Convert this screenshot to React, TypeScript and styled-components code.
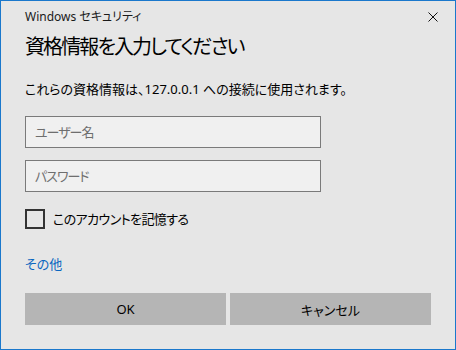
import React from 'react';
import styled, { createGlobalStyle } from 'styled-components';

const GlobalStyle = createGlobalStyle`
   html, body {
      margin: 0;
      padding: 0;
      background: #e6e6e6;
   }
   * {
      box-sizing: border-box;
   }
`;

const font = `"Segoe UI", "Noto Sans", "Noto Sans CJK JP", sans-serif`;

const Window = styled.div`
   width: 456px;
   height: 350px;
   border: 1px solid #1a78cc;
   background-color: #e6e6e6;
   display: flex;
   flex-direction: column;
   font-family: ${font};
   font-feature-settings: 'palt';
   color: #000;
`;

const TitleBar = styled.div`
   display: flex;
   justify-content: space-between;
   align-items: flex-start;
   padding: 8px 17px 0 24px;
   height: 32px;
`;

const Caption = styled.span`
   font-size: 12px;
   line-height: 16px;
   color: #1a1a1a;
`;

const CloseButton = styled.button`
   border: none;
   background: none;
   padding: 0;
   margin-top: 3px;
   width: 10px;
   height: 10px;
   display: flex;
   cursor: pointer;
`;

const Body = styled.div`
   display: flex;
   flex-direction: column;
   padding: 0 24px;
`;

const Heading = styled.h1`
   margin: 0;
   font-size: 20px;
   font-weight: normal;
   line-height: 28px;
   letter-spacing: -1.9px;
`;

const Description = styled.p`
   margin: 19px 0 0;
   font-size: 13px;
   line-height: 18px;
`;

const Field = styled.input`
   width: 296px;
   height: 32px;
   margin-top: ${(p: { $gap: number }) => p.$gap}px;
   padding: 0 9px;
   border: 1px solid #7a7a7a;
   background-color: #f0f0f0;
   font-family: ${font};
   font-feature-settings: 'palt';
   font-size: 13px;
   letter-spacing: -1px;
   outline: none;

   &::placeholder {
      color: #6e6e6e;
   }
`;

const CheckRow = styled.label`
   display: flex;
   align-items: center;
   gap: 8px;
   margin-top: 17px;
   font-size: 13px;
   line-height: 20px;
   letter-spacing: -0.6px;
`;

const CheckBox = styled.span`
   width: 20px;
   height: 20px;
   border: 2px solid #333;
   display: block;
`;

const MoreLink = styled.a`
   margin-top: 26px;
   font-size: 13px;
   line-height: 18px;
   color: #0a67c0;
   text-decoration: none;
   align-self: flex-start;
`;

const ButtonRow = styled.div`
   display: grid;
   grid-template-columns: 1fr 1fr;
   gap: 4px;
   margin-top: 20px;
`;

const Button = styled.button`
   height: 32px;
   border: none;
   background-color: #b5b5b5;
   font-family: ${font};
   font-feature-settings: 'palt';
   font-size: 13px;
   color: #000;
`;

const App = () => {
   return (
      <Window>
         <GlobalStyle />
         <TitleBar>
            <Caption>Windows セキュリティ</Caption>
            <CloseButton aria-label='閉じる'>
               <svg width='10' height='10' viewBox='0 0 10 10'>
                  <path d='M0.5 0.5 L9.5 9.5 M9.5 0.5 L0.5 9.5' stroke='#111' strokeWidth='1' />
               </svg>
            </CloseButton>
         </TitleBar>
         <Body>
            <Heading>資格情報を入力してください</Heading>
            <Description>これらの資格情報は、127.0.0.1 への接続に使用されます。</Description>
            <Field $gap={18} placeholder='ユーザー名' />
            <Field $gap={12} type='password' placeholder='パスワード' />
            <CheckRow>
               <CheckBox />
               このアカウントを記憶する
            </CheckRow>
            <MoreLink href='#'>その他</MoreLink>
            <ButtonRow>
               <Button>OK</Button>
               <Button>キャンセル</Button>
            </ButtonRow>
         </Body>
      </Window>
   );
};

export default App;
